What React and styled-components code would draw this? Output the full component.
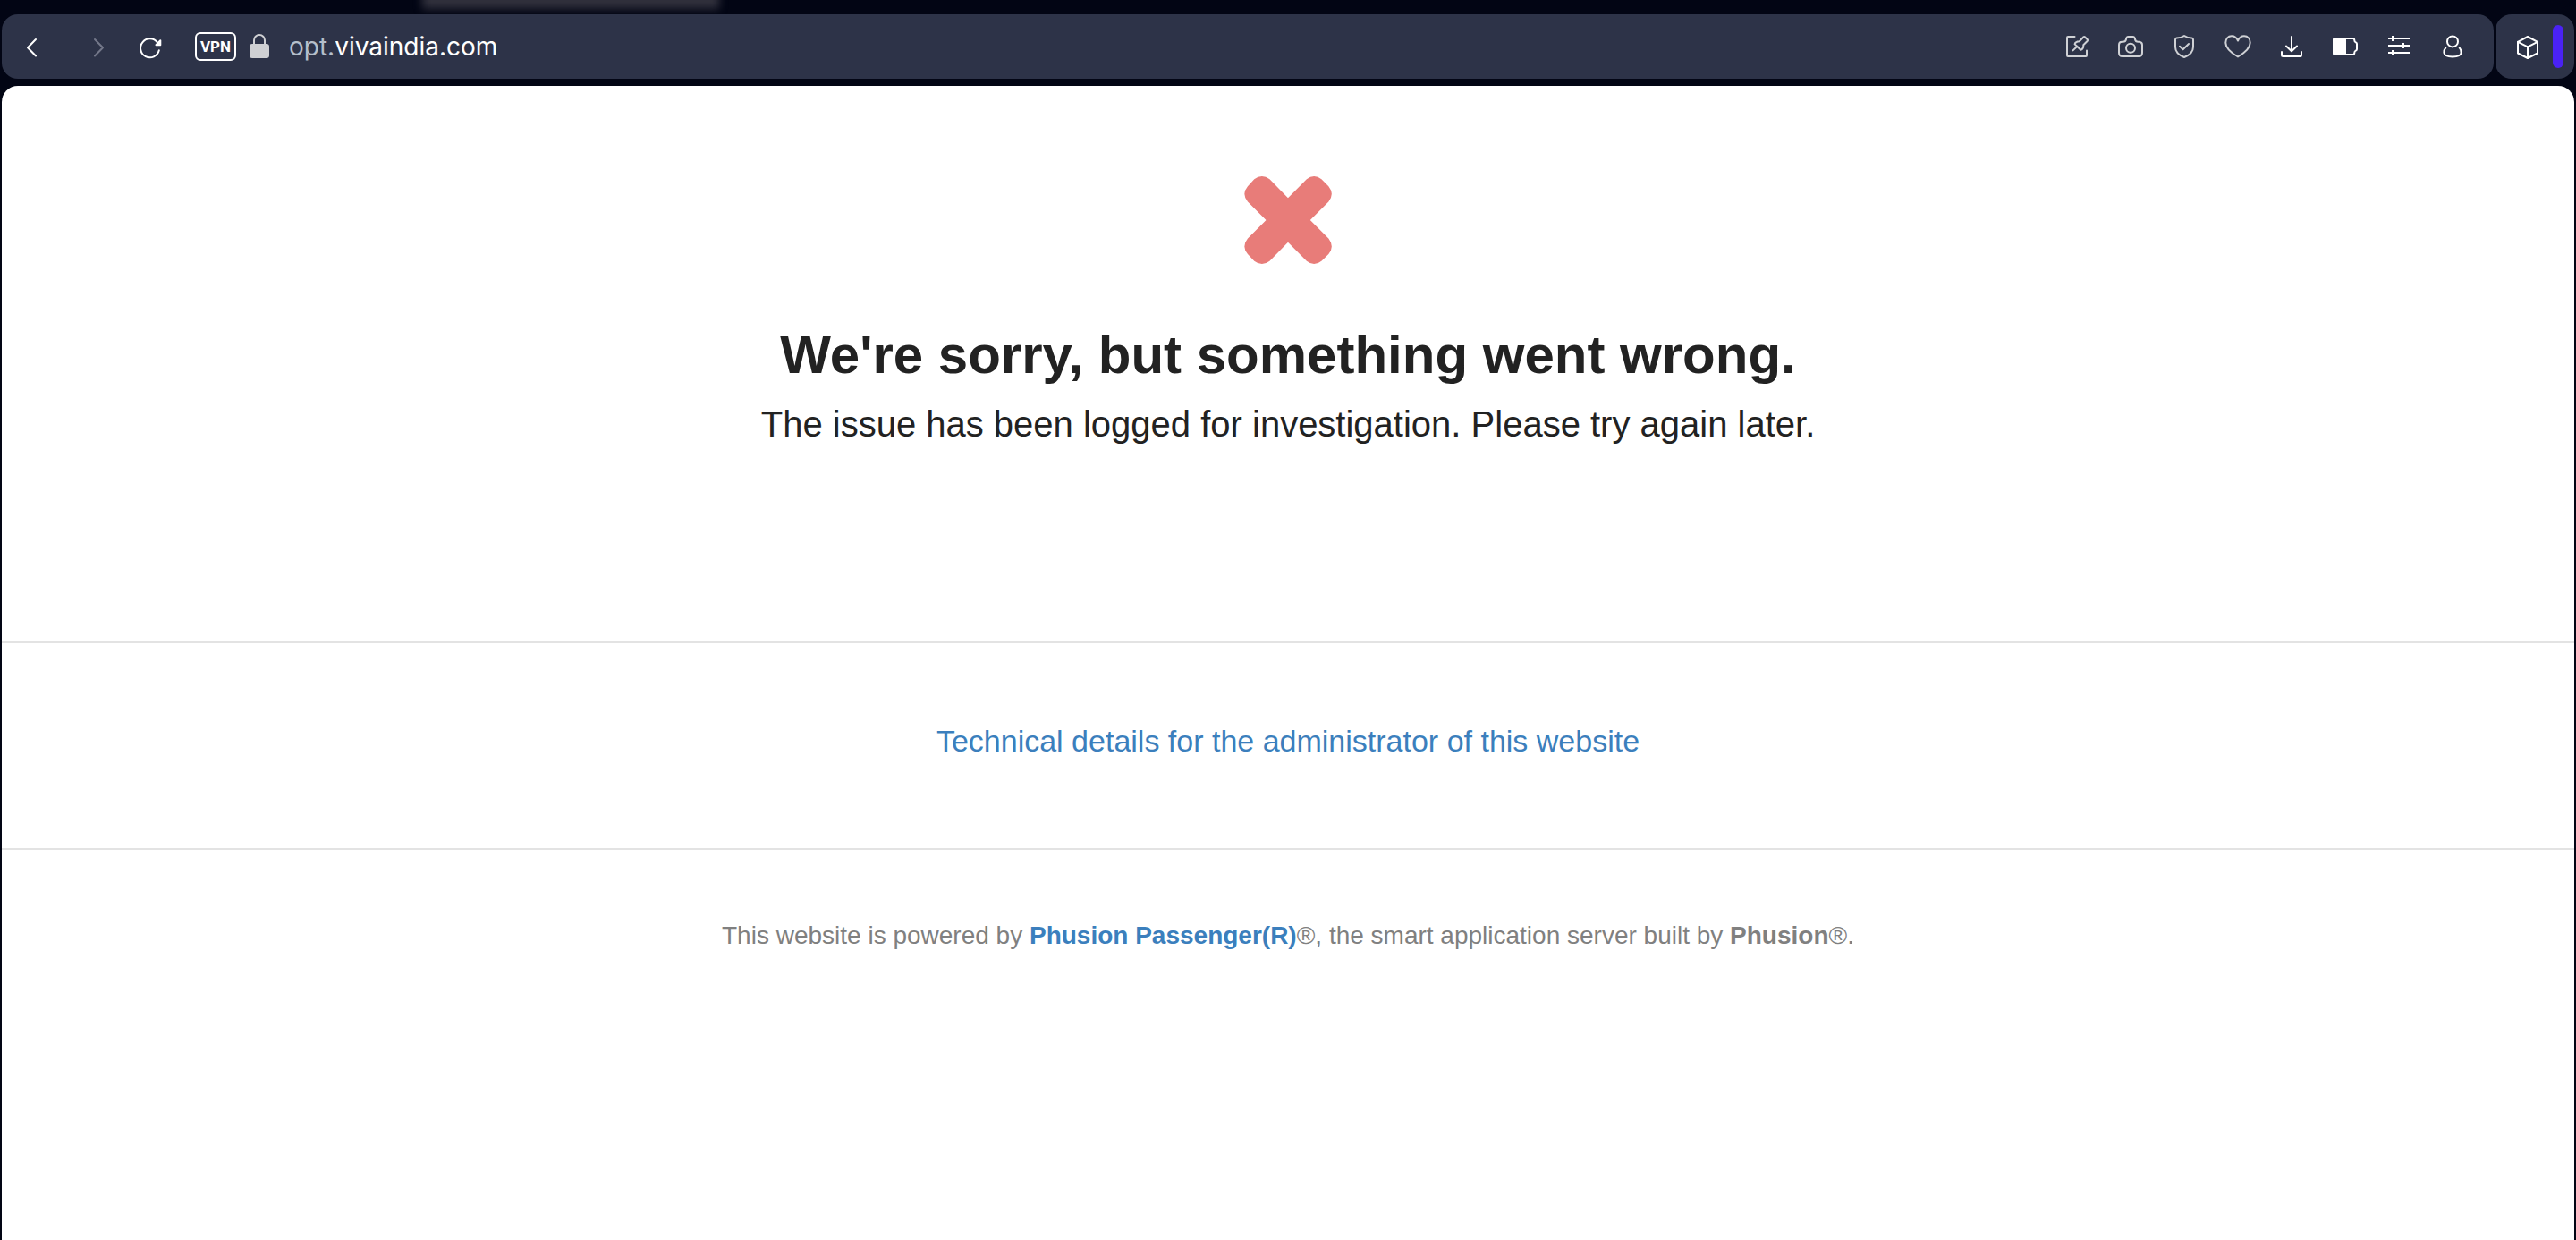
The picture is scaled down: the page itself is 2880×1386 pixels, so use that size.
import React from "react";
import styled, { createGlobalStyle } from "styled-components";

const GlobalStyle = createGlobalStyle`
  *, *::before, *::after { box-sizing: border-box; }
  html, body { margin: 0; padding: 0; }
  body {
    background: #020514;
    font-family: "Liberation Sans", Arial, sans-serif;
  }
`;

const Window = styled.div`
  display: flex;
  flex-direction: column;
  min-height: 100vh;
  padding: 0 2px;
`;

const TabStrip = styled.div`
  position: relative;
  height: 16px;
  overflow: hidden;
`;

const TabGlow = styled.div`
  position: absolute;
  top: -16px;
  left: 470px;
  width: 332px;
  height: 26px;
  background: #30303c;
  filter: blur(5px);
`;

const Chrome = styled.header`
  display: flex;
  gap: 2px;
  height: 72px;
  margin-bottom: 8px;
`;

const Panel = styled.div`
  display: flex;
  align-items: center;
  flex: ${(p) => (p.$grow ? "1" : "none")};
  padding: ${(p) => (p.$grow ? "0 16px 0 4px" : "0 12px 0 14px")};
  gap: ${(p) => (p.$grow ? "0" : "6px")};
  border-radius: 18px;
  background: #2d3348;
`;

const PlainButton = styled.button`
  display: flex;
  align-items: center;
  justify-content: center;
  padding: 0;
  border: 0;
  background: none;
  color: inherit;
  font: inherit;
`;

const ToolButton = styled(PlainButton)`
  width: ${(p) => (p.$narrow ? "44px" : "60px")};
  height: 60px;
  color: ${(p) => p.$tone || "#ffffff"};
`;

const Nav = styled.nav`
  display: flex;
`;

const ForwardSlot = styled.div`
  margin-left: 14px;
`;

const Address = styled.div`
  display: flex;
  align-items: center;
  flex: 1;
  margin-left: 18px;
  font-family: Inter, Roboto, sans-serif;
`;

const VpnButton = styled(PlainButton)`
  width: 46px;
  height: 32px;
  border: 2px solid #ffffff;
  border-radius: 6px;
  color: #ffffff;
  font-family: Roboto, sans-serif;
  font-size: 17px;
  font-weight: 700;
  line-height: 20px;
`;

const LockButton = styled(PlainButton)`
  margin: 0 22px 0 15px;
  color: #cfd0d3;
`;

const Url = styled(PlainButton)`
  color: #ffffff;
  font-size: 28px;
  font-weight: 400;
  line-height: 36px;
`;

const Subdomain = styled.span`
  color: #b4bfcb;
`;

const Tools = styled.div`
  display: flex;
`;

const Accent = styled.span`
  width: 12px;
  height: 48px;
  border-radius: 6px;
  background: #4a22f4;
`;

const Page = styled.main`
  flex: 1;
  border-radius: 18px 18px 0 0;
  background: #ffffff;
  color: #222222;
  text-align: center;
`;

const Message = styled.section`
  display: flex;
  flex-direction: column;
  align-items: center;
  padding: 101px 40px 219px;
`;

const Title = styled.h1`
  margin: 66px 0 17px;
  font-size: 60px;
  font-weight: 700;
  line-height: 72px;
`;

const Lead = styled.p`
  margin: 0;
  font-size: 40px;
  line-height: 48px;
`;

const Details = styled.section`
  padding: 89px 40px 100px;
  border-top: 2px solid #e3e3e3;
  border-bottom: 2px solid #e3e3e3;
  font-size: 34px;
  line-height: 40px;
`;

const Link = styled.a`
  color: #3b7fbd;
  text-decoration: none;
`;

const Powered = styled.footer`
  padding: 80px 40px;
  color: #808080;
  font-size: 28px;
  line-height: 32px;
`;

function Icon({ children }) {
  return (
    <svg width="32" height="32" viewBox="0 0 32 32" fill="none" stroke="currentColor"
      strokeWidth="2" strokeLinecap="round" strokeLinejoin="round" aria-hidden="true">
      {children}
    </svg>
  );
}

const SOFT = "#cfd1d5";

const tools = [
  {
    label: "Pinboards", tone: SOFT,
    art: (
      <>
        <path d="M13.5 5H6Q5 5 5 6V26Q5 27 6 27H26Q27 27 27 26V20.5" />
        <path d="M11.6 20.4L16.4 15.8" />
        <path d="M13.6 13.4C14 11 16.5 10.3 18.8 10.2L23.5 5.3Q24.2 4.6 24.9 5.3L27.8 8.2Q28.5 8.9 27.8 9.7L23.3 14.2C23.4 16.5 22.5 19 20.2 19.8Z" />
      </>
    ),
  },
  {
    label: "Snapshot", tone: SOFT,
    art: (
      <>
        <path d="M6.5 10.7H7.5Q10.5 10.7 11 8Q11.3 5 13.5 5H18.5Q20.7 5 21 8Q21.5 10.7 24.5 10.7H25.5Q29 11 29 14V23Q29 27 25 27H7Q3 27 3 23V14Q3 10.7 6.5 10.7Z" />
        <circle cx="16" cy="17.8" r="5" />
      </>
    ),
  },
  {
    label: "Tracker protection", tone: SOFT,
    art: (
      <>
        <path d="M16 4Q19.5 6.3 24.5 6.6Q26 6.8 26 8.2V16.5C26 22.5 21 26 16 28C11 26 6 22.5 6 16.5V8.2Q6 6.8 7.5 6.6Q12.5 6.3 16 4Z" />
        <path d="M11 15.8L14.6 19.2L21 13" />
      </>
    ),
  },
  {
    label: "Bookmark", tone: SOFT,
    art: <path d="M16 9.5C14.5 6 12 4.3 9 4.3C5 4.3 2.3 7.5 2.3 11.8C2.3 18.5 10 24 16 27.5C22 24 29.7 18.5 29.7 11.8C29.7 7.5 27 4.3 23 4.3C20 4.3 17.5 6 16 9.5Z" />,
  },
  {
    label: "Downloads",
    art: (
      <>
        <path d="M16 5V21M10 15.5L16 21.2L22 15.5" />
        <path d="M5 22V25.5Q5 27 6.5 27H25.5Q27 27 27 25.5V22" />
      </>
    ),
  },
  {
    label: "Battery saver",
    art: (
      <>
        <path d="M5 7H24.5Q26.3 7 26.3 9Q26.3 11 27.8 11.4Q29 12 29 13V19Q29 20 27.8 20.6Q26.3 21 26.3 23Q26.3 25 24.5 25H5Q3 25 3 23V9Q3 7 5 7Z" />
        <path d="M16 7H5Q3 7 3 9V23Q3 25 5 25H16Z" fill="currentColor" />
      </>
    ),
  },
  {
    label: "Easy setup",
    art: <path strokeLinecap="butt" d="M4 7H28M4 15H28M4 23H28M9 4V10M21 12V18M9 20V26" />,
  },
  {
    label: "Profile",
    art: (
      <>
        <circle cx="16" cy="10.4" r="6" />
        <path d="M8.3 17.4C6.8 19 6.2 21 6.4 23C6.8 26.5 11 27.4 16 27.4C21 27.4 25.2 26.5 25.6 23C25.8 21 25.2 19 23.7 17.4" />
      </>
    ),
  },
];

export default function App() {
  return (
    <>
      <GlobalStyle />
      <Window>
        <TabStrip>
          <TabGlow />
        </TabStrip>
        <Chrome>
          <Panel $grow>
            <Nav aria-label="History">
              <ToolButton aria-label="Back">
                <Icon><path d="M20 8L11 17.3L20 26.5" /></Icon>
              </ToolButton>
              <ForwardSlot>
                <ToolButton aria-label="Forward" $tone="#74788a">
                  <Icon><path d="M12 8L21 17.3L12 26.5" /></Icon>
                </ToolButton>
              </ForwardSlot>
              <ToolButton aria-label="Reload">
                <Icon>
                  <path d="M23.8 20.3A10.5 10.5 0 1 1 22 11.5" />
                  <path d="M25.3 9.3V14.2H20.5Z" fill="currentColor" />
                </Icon>
              </ToolButton>
            </Nav>
            <Address>
              <VpnButton>VPN</VpnButton>
              <LockButton aria-label="Site information">
                <svg width="22" height="28" viewBox="0 0 22 28" aria-hidden="true">
                  <rect x="0" y="11" width="22" height="16" rx="3" fill="currentColor" />
                  <path d="M5 12V7A6 6 0 0 1 17 7V12" fill="none" stroke="currentColor" strokeWidth="2" />
                </svg>
              </LockButton>
              <Url><span><Subdomain>opt.</Subdomain>vivaindia.com</span></Url>
            </Address>
            <Tools>
              {tools.map((t) => (
                <ToolButton key={t.label} aria-label={t.label} $tone={t.tone}>
                  <Icon>{t.art}</Icon>
                </ToolButton>
              ))}
            </Tools>
          </Panel>
          <Panel>
            <ToolButton aria-label="Extensions" $narrow>
              <Icon>
                <path d="M16 5L27 10.8V23.5L16 29L5 23.5V10.8Z" />
                <path d="M5 10.8L16 16.3L27 10.8M16 16.3V29" />
              </Icon>
            </ToolButton>
            <Accent />
          </Panel>
        </Chrome>
        <Page>
          <Message>
            <svg width="98" height="98" viewBox="92 80 296 296" aria-hidden="true">
              <path
                fill="#e87c79"
                d="M240 153L303 90Q328 70 353 90L377 114Q398 140 377 166L315 228L377 290Q398 317 377 343L353 366Q328 386 303 366L240 303L178 366Q152 386 126 366L104 343Q82 317 104 290L166 228L104 166Q82 140 104 114L126 90Q152 70 178 90Z"
              />
            </svg>
            <Title>We're sorry, but something went wrong.</Title>
            <Lead>The issue has been logged for investigation. Please try again later.</Lead>
          </Message>
          <Details>
            <Link href="#details">Technical details for the administrator of this website</Link>
          </Details>
          <Powered>
            This website is powered by{" "}
            <Link href="#passenger"><strong>Phusion Passenger(R)</strong></Link>
            ®, the smart application server built by <strong>Phusion</strong>®.
          </Powered>
        </Page>
      </Window>
    </>
  );
}
